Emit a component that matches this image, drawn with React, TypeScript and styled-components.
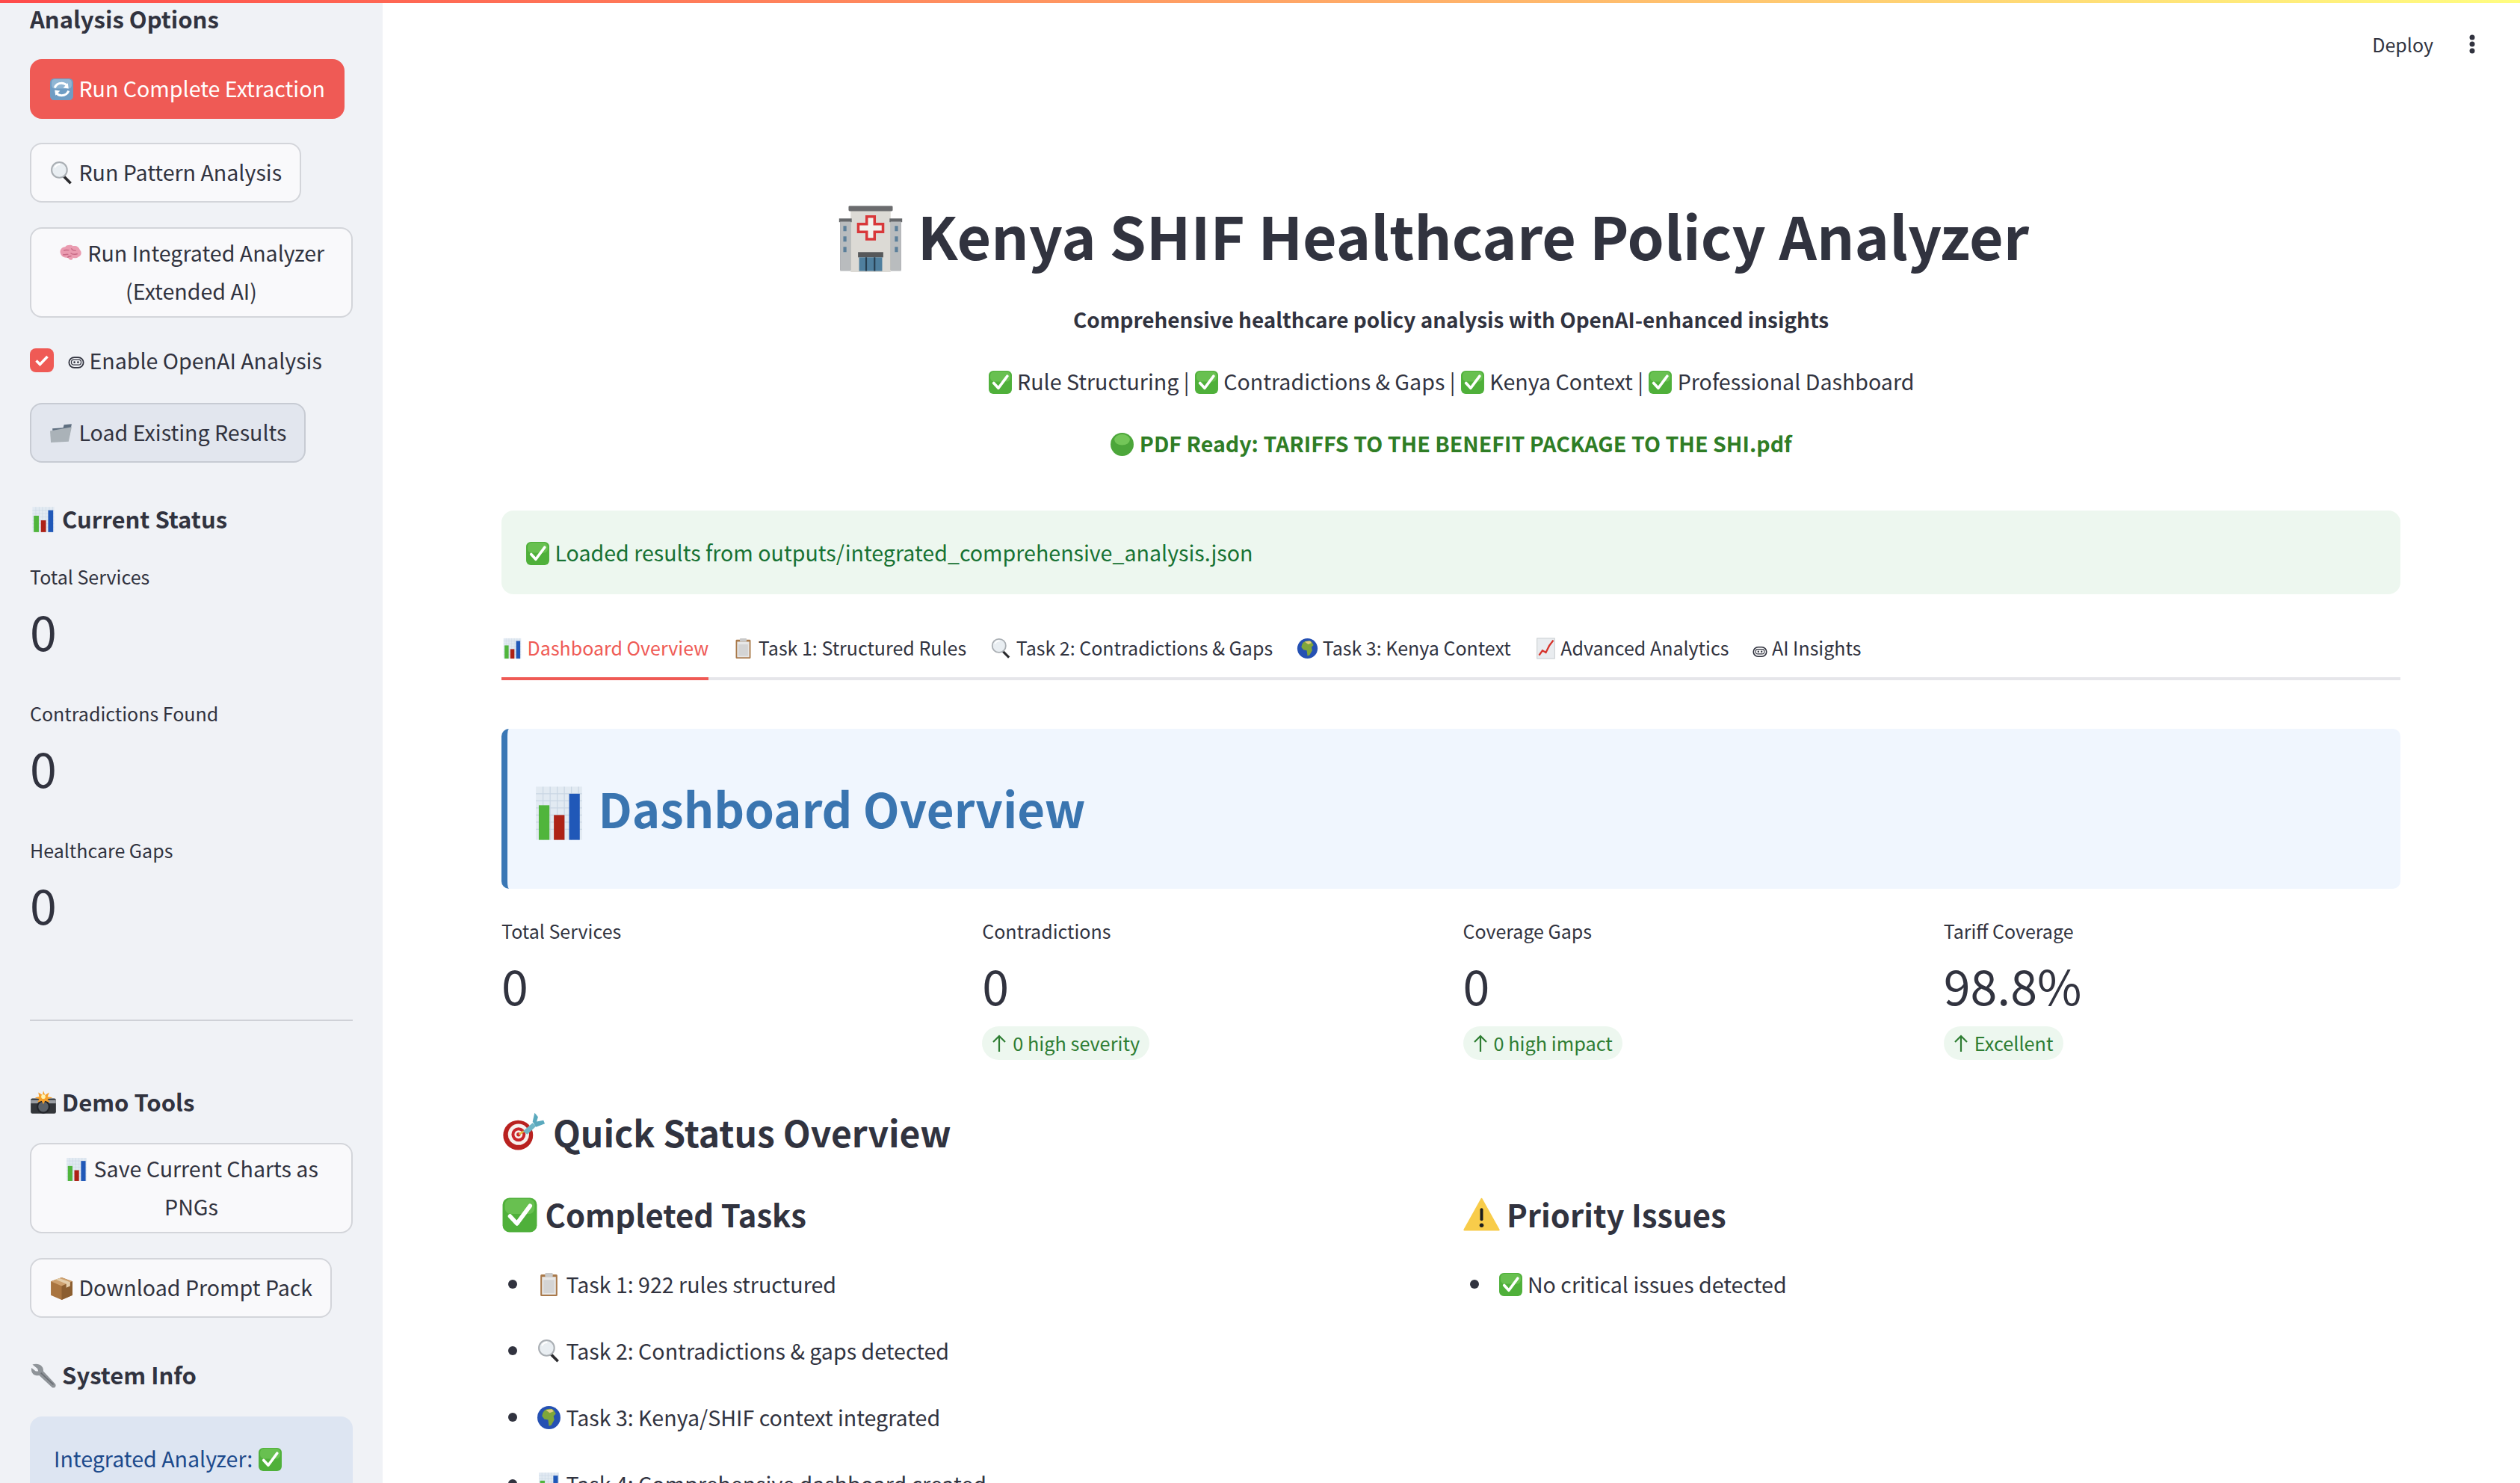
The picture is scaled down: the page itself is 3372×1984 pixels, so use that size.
import React from "react";
import styled, { createGlobalStyle } from "styled-components";

type EmojiKind =
  | "check" | "refresh" | "search" | "brain" | "robot" | "folder" | "chart" | "trend" | "camera"
  | "box" | "wrench" | "hospital" | "greenDot" | "clipboard" | "globe" | "target" | "warning";

const drawings: Record<EmojiKind, React.ReactNode> = {
  check: (
    <>
      <rect x="1" y="1" width="30" height="30" rx="6" fill="#4fb03a" />
      <rect x="3" y="2" width="26" height="13" rx="5" fill="#7acb5f" opacity=".6" />
      <path d="M7.5 17l6 6.5L25 8" fill="none" stroke="#fff" strokeWidth="3.6" strokeLinecap="round" strokeLinejoin="round" />
    </>
  ),
  refresh: (
    <>
      <rect x="1" y="2" width="30" height="28" rx="5" fill="#6f9dc4" />
      <rect x="3" y="3" width="26" height="12" rx="4" fill="#9ec0dc" opacity=".7" />
      <path d="M7 14c1.5-4 5-6 9-6 3 0 5 1 7 3" fill="none" stroke="#fff" strokeWidth="3" />
      <path d="M25 15l-7-1 6-6z" fill="#fff" />
      <path d="M25 18c-1.5 4-5 6-9 6-3 0-5-1-7-3" fill="none" stroke="#fff" strokeWidth="3" />
      <path d="M7 17l7 1-6 6z" fill="#fff" />
    </>
  ),
  search: (
    <>
      <path d="M20 19l9 9-2.5 2.5-9-9z" fill="#2b2b2e" />
      <circle cx="13" cy="12" r="10" fill="#e9eef2" stroke="#a9aeb3" strokeWidth="2" />
      <path d="M7 9c1.5-3 4-4.500 7-4" fill="none" stroke="#fff" strokeWidth="2" />
    </>
  ),
  brain: (
    <>
      <path d="M3 16c-2-5 2-9 6-9 2-3 8-3 10-1 4-1 8 1 9 5 3 3 2 8-2 9-2 2-5 2-7 1 0 3-3 4-5 2-1-2-2-2-4-2-3 0-6-2-7-5z" fill="#ea9bb0" />
      <path d="M7 12c3-2 5 0 7-1M17 9c1 3 4 3 6 3M6 17c3 1 5-1 7 0M16 15c2 2 6 2 9 1M12 21c1-2 3-2 5-2" fill="none" stroke="#c96c87" strokeWidth="1.4" />
    </>
  ),
  robot: (
    <>
      <rect x="2" y="6" width="28" height="20" rx="10" fill="none" stroke="#31333f" strokeWidth="2.6" />
      <rect x="6.500" y="10.500" width="19" height="10" rx="5" fill="none" stroke="#31333f" strokeWidth="1.800" />
      <circle cx="12.500" cy="15.500" r="1.900" fill="#31333f" />
      <circle cx="19.500" cy="15.500" r="1.900" fill="#31333f" />
    </>
  ),
  folder: (
    <>
      <path d="M4 10l14-1 1-4 10-1-3 16-21 2z" fill="#5f6f80" />
      <path d="M1 13l28-5-4 19-23 1z" fill="#aab2b8" />
    </>
  ),
  chart: (
    <>
      <rect x="3" y="1" width="26" height="30" fill="#e2eaf2" />
      <path d="M3 5h26M3 9h26M3 13h26M3 17h26M3 21h26M3 25h26M7 1v30M11 1v30M15 1v30M19 1v30M23 1v30M27 1v30" stroke="#c9d6e4" strokeWidth=".5" />
      <rect x="4.600" y="11.500" width="6" height="19.500" fill="#50b53c" />
      <rect x="13.100" y="17" width="6" height="14" fill="#ad2216" />
      <rect x="21.700" y="5" width="6" height="26" fill="#2058b8" />
    </>
  ),
  trend: (
    <>
      <rect x="3" y="1" width="26" height="30" fill="#e9ecef" stroke="#c4c8cc" />
      <path d="M6 26l5-7 5 3 5-10 6-8" fill="none" stroke="#d6332b" strokeWidth="2.6" />
    </>
  ),
  camera: (
    <>
      <rect x="1" y="11" width="30" height="18" rx="2" fill="#33363a" />
      <rect x="1" y="13" width="30" height="4" fill="#9a9ea3" />
      <circle cx="16" cy="21" r="7" fill="#5b6168" stroke="#22252a" strokeWidth="2" />
      <path d="M16 2l2 5 5-3-2 5 6 1-6 2 3 4-6-2-2 4-2-4-5 2 2-4-5-2 5-1-1-5 5 3z" fill="#f6a02b" />
      <circle cx="16" cy="9" r="2.500" fill="#fff3b0" />
    </>
  ),
  box: (
    <>
      <path d="M16 2l14 5v18l-14 6-14-6V7z" fill="#a9743f" />
      <path d="M2 7l14 6 14-6-14-5z" fill="#cda06e" />
      <path d="M16 13v18l14-6V7z" fill="#8c5e30" />
      <path d="M8 4.500l14 5.700v5l5-2V8L13 2.800z" fill="#e4cdaa" />
    </>
  ),
  wrench: (
    <>
      <path d="M3 3l6 5 1 3-3 0-5-4c-1 4 1 8 5 9 2 .5 3 0 4 0l15 14c1 1 3 1 4 0s1-3 0-4L16 11c0-2 0-4-2-6-3-3-7-3-11-2z" fill="#8f9499" />
      <path d="M13 13l15 14" stroke="#6b6f75" strokeWidth="1.500" />
    </>
  ),
  hospital: (
    <>
      <rect x="3" y="16" width="58" height="46" fill="#7b7f83" />
      <rect x="13" y="4" width="38" height="60" fill="#dcdad5" />
      <rect x="11" y="1" width="42" height="5" rx="1" fill="#6b6c6e" />
      <rect x="2" y="13" width="12" height="3.500" fill="#65676a" />
      <rect x="50" y="13" width="12" height="3.500" fill="#65676a" />
      <rect x="3" y="16" width="10" height="47" fill="#b9bcbe" />
      <rect x="51" y="16" width="10" height="47" fill="#b9bcbe" />
      <path d="M6 20h3v5H6zm0 10h3v5H6zm0 10h3v5H6zm49-20h3v5h-3zm0 10h3v5h-3zm0 10h3v5h-3z" fill="#5b7f9a" />
      <path d="M27 10h10v7h8v10h-8v7H27v-7h-8V17h8z" fill="#d8383a" />
      <path d="M29.500 12.500h5v7h8v5h-8v7h-5v-7h-8v-5h8z" fill="#f2f2ee" />
      <rect x="20" y="45" width="24" height="5" fill="#56585a" />
      <rect x="21" y="50" width="22" height="13" fill="#4f7f9e" />
      <path d="M27 50h1.500v13H27zm8 0h1.500v13H35z" fill="#263e50" />
    </>
  ),
  greenDot: (
    <>
      <circle cx="16" cy="16" r="15" fill="#4ca63a" />
      <ellipse cx="16" cy="10" rx="10" ry="7" fill="#84d465" opacity=".7" />
    </>
  ),
  clipboard: (
    <>
      <rect x="5" y="3" width="22" height="28" rx="1.500" fill="#a9794a" />
      <rect x="7" y="6" width="18" height="23" fill="#e7e7e7" />
      <rect x="11" y="1" width="10" height="5" rx="1" fill="#c9c9c9" />
      <path d="M9 10h14v17H9z" fill="#d4d4d4" />
    </>
  ),
  globe: (
    <>
      <circle cx="16" cy="16" r="15" fill="#2551b3" />
      <path d="M10 7c4-3 9-3 12-1l3 5-3 3 1 5-4 7-3 1-1-8-5-1-3-4 1-4z" fill="#7fa63a" />
      <path d="M12 6l8-1 2 3-5 2z" fill="#e3cb7b" />
    </>
  ),
  target: (
    <>
      <circle cx="12.300" cy="18" r="11" fill="#b9211f" />
      <circle cx="12.600" cy="17.500" r="7.800" fill="#f7f1ee" />
      <circle cx="12.600" cy="17.500" r="5.200" fill="#c9252b" />
      <circle cx="12.600" cy="17.500" r="3" fill="#f7f1ee" />
      <circle cx="12.600" cy="17.500" r="1.500" fill="#c9252b" />
      <path d="M13 17.500l3.500-2.500" stroke="#e5b93c" strokeWidth="1.400" />
      <path d="M16 15l7-6 2.500 2.500-6.500 6z" fill="#6fb6c6" />
      <path d="M23 8l1.500-6.500 2.500 3-1 3.500 5-1 1 2.500-6.500 2.500z" fill="#5aa9bd" />
    </>
  ),
  warning: (
    <>
      <path d="M16 2L31 29H1z" fill="#f8cc4a" stroke="#f8cc4a" strokeWidth="1.500" strokeLinejoin="round" />
      <rect x="14.700" y="10" width="2.600" height="11" rx="1.300" fill="#1d1d1d" />
      <circle cx="16" cy="25" r="1.800" fill="#1d1d1d" />
    </>
  ),
};

function Emoji({ kind, size = 33 }: { kind: EmojiKind; size?: number }) {
  const box = kind === "hospital" ? 64 : 32;
  return (
    <EmojiSvg width={size} height={size} viewBox={`0 0 ${box} ${box}`} aria-hidden="true">
      {drawings[kind]}
    </EmojiSvg>
  );
}

const tabs: { kind: EmojiKind; label: string; active?: boolean; iconSize?: number }[] = [
  { kind: "chart", label: "Dashboard Overview", active: true },
  { kind: "clipboard", label: "Task 1: Structured Rules" },
  { kind: "search", label: "Task 2: Contradictions & Gaps" },
  { kind: "globe", label: "Task 3: Kenya Context" },
  { kind: "trend", label: "Advanced Analytics" },
  { kind: "robot", label: "AI Insights", iconSize: 20 },
];

const metrics = [
  { label: "Total Services", value: "0" },
  { label: "Contradictions", value: "0", delta: "0 high severity" },
  { label: "Coverage Gaps", value: "0", delta: "0 high impact" },
  { label: "Tariff Coverage", value: "98.8%", delta: "Excellent" },
];

const tasks: { kind: EmojiKind; label: string }[] = [
  { kind: "clipboard", label: "Task 1: 922 rules structured" },
  { kind: "search", label: "Task 2: Contradictions & gaps detected" },
  { kind: "globe", label: "Task 3: Kenya/SHIF context integrated" },
  { kind: "chart", label: "Task 4: Comprehensive dashboard created" },
];

function SideMetric({ label }: { label: string }) {
  return (
    <SideMetricBox>
      <MetricLabel>{label}</MetricLabel>
      <MetricValue>0</MetricValue>
    </SideMetricBox>
  );
}

export default function App() {
  return (
    <Page>
      <GlobalStyle />
      <TopStripe />
      <Toolbar>
        <DeployLabel>Deploy</DeployLabel>
        <svg width="8" height="26" viewBox="0 0 8 26" aria-hidden="true">
          <circle cx="4" cy="4" r="3.500" fill="#31333f" />
          <circle cx="4" cy="13" r="3.500" fill="#31333f" />
          <circle cx="4" cy="22" r="3.500" fill="#31333f" />
        </svg>
      </Toolbar>

      <Sidebar>
        <SideHeading>Analysis Options</SideHeading>
        <ActionButton $variant="primary" $top={34}><Emoji kind="refresh" /> Run Complete Extraction</ActionButton>
        <ActionButton $top={32}><Emoji kind="search" /> Run Pattern Analysis</ActionButton>
        <ActionButton $wide $top={33}><Emoji kind="brain" /> Run Integrated Analyzer (Extended AI)</ActionButton>
        <CheckRow>
          <CheckBox>
            <svg width="24" height="24" viewBox="0 0 24 24" aria-hidden="true">
              <path d="M4.500 12.500l5 5L19.500 7" fill="none" stroke="#fff" strokeWidth="3.500" />
            </svg>
          </CheckBox>
          <CheckText><Emoji kind="robot" size={22} /> Enable OpenAI Analysis</CheckText>
        </CheckRow>
        <ActionButton $variant="hover" $top={41}><Emoji kind="folder" /> Load Existing Results</ActionButton>

        <SideHeading $top={55}><Emoji kind="chart" size={36} /> Current Status</SideHeading>
        <SideMetrics>
          <SideMetric label="Total Services" />
          <SideMetric label="Contradictions Found" />
          <SideMetric label="Healthcare Gaps" />
        </SideMetrics>
        <SideRule />

        <SideHeading $top={88}><Emoji kind="camera" size={36} /> Demo Tools</SideHeading>
        <ActionButton $wide $top={35}><Emoji kind="chart" /> Save Current Charts as PNGs</ActionButton>
        <ActionButton $top={33}><Emoji kind="box" /> Download Prompt Pack</ActionButton>

        <SideHeading $top={56}><Emoji kind="wrench" size={36} /> System Info</SideHeading>
        <InfoBox>Integrated Analyzer: <Emoji kind="check" /></InfoBox>
      </Sidebar>

      <Main>
        <Title><Emoji kind="hospital" size={90} /> Kenya SHIF Healthcare Policy Analyzer</Title>
        <Subtitle>Comprehensive healthcare policy analysis with OpenAI-enhanced insights</Subtitle>
        <CenterLine>
          <Emoji kind="check" /> Rule Structuring | <Emoji kind="check" /> Contradictions &amp; Gaps | <Emoji kind="check" /> Kenya Context | <Emoji kind="check" /> Professional Dashboard
        </CenterLine>
        <PdfLine><Emoji kind="greenDot" /> PDF Ready: TARIFFS TO THE BENEFIT PACKAGE TO THE SHI.pdf</PdfLine>

        <SuccessAlert><Emoji kind="check" /> Loaded results from outputs/integrated_comprehensive_analysis.json</SuccessAlert>

        <TabBar>
          {tabs.map((tab) => (
            <Tab key={tab.label} $active={tab.active}>
              <Emoji kind={tab.kind} size={tab.iconSize ?? 29} /> {tab.label}
            </Tab>
          ))}
        </TabBar>

        <SectionBanner>
          <Emoji kind="chart" size={76} /> Dashboard Overview
        </SectionBanner>

        <MetricGrid>
          {metrics.map((m) => (
            <div key={m.label}>
              <MetricLabel>{m.label}</MetricLabel>
              <MetricValue>{m.value}</MetricValue>
              {m.delta && (
                <DeltaPill>
                  <svg width="22" height="26" viewBox="0 0 22 26" aria-hidden="true">
                    <path d="M11 24V3M3 11l8-8 8 8" fill="none" stroke="#2e7d32" strokeWidth="2.200" />
                  </svg>
                  {m.delta}
                </DeltaPill>
              )}
            </div>
          ))}
        </MetricGrid>

        <H2><Emoji kind="target" size={58} /> Quick Status Overview</H2>

        <TwoColumns>
          <div>
            <H3><Emoji kind="check" size={49} /> Completed Tasks</H3>
            <BulletList>
              {tasks.map((t) => (
                <li key={t.label}><Emoji kind={t.kind} /> {t.label}</li>
              ))}
            </BulletList>
          </div>
          <div>
            <H3><Emoji kind="warning" size={49} /> Priority Issues</H3>
            <BulletList>
              <li><Emoji kind="check" /> No critical issues detected</li>
            </BulletList>
          </div>
        </TwoColumns>
      </Main>
    </Page>
  );
}

const GlobalStyle = createGlobalStyle`
  html, body {
    margin: 0;
    padding: 0;
    background: #fff;
  }
  * {
    box-sizing: border-box;
  }
`;

const Page = styled.div`
  position: relative;
  display: flex;
  width: 3372px;
  height: 1984px;
  overflow: hidden;
  color: #31333f;
  font-family: "Noto Sans CJK SC", "Noto Sans", sans-serif;
  font-size: 28.6px;
  line-height: 51px;
`;

const EmojiSvg = styled.svg`
  display: inline-block;
  vertical-align: -0.2em;
  flex-shrink: 0;
`;

const TopStripe = styled.div`
  position: absolute;
  top: 0;
  left: 0;
  right: 0;
  height: 4px;
  background: linear-gradient(90deg, #ff4b4b, #fffd80);
  z-index: 2;
`;

const Toolbar = styled.div`
  position: absolute;
  top: 46px;
  right: 60px;
  display: flex;
  align-items: center;
  gap: 48px;
  height: 26px;
`;

const DeployLabel = styled.span`
  font-size: 25px;
`;

const Sidebar = styled.aside`
  flex: 0 0 512px;
  height: 100%;
  padding: 5px 40px 0;
  background: #f0f2f6;
  display: flex;
  flex-direction: column;
  align-items: flex-start;

  > * {
    flex-shrink: 0;
  }
`;

const SideHeading = styled.h3<{ $top?: number }>`
  margin: ${(p) => p.$top ?? 0}px 0 0;
  font-size: 31px;
  line-height: 40px;
  font-weight: 600;
`;

const ActionButton = styled.button<{ $variant?: "primary" | "hover"; $wide?: boolean; $top: number }>`
  margin-top: ${(p) => p.$top}px;
  min-height: 80px;
  width: ${(p) => (p.$wide ? "100%" : "auto")};
  padding: 6px 24px 9px;
  border-radius: 16px;
  border: 2px solid ${(p) => (p.$variant === "primary" ? "#ef5a55" : p.$variant === "hover" ? "#c7cbd3" : "#d3d5da")};
  background: ${(p) => (p.$variant === "primary" ? "#ef5a55" : p.$variant === "hover" ? "#e2e6ee" : "#f9f9fb")};
  color: ${(p) => (p.$variant === "primary" ? "#fff" : "#31333f")};
  font: inherit;
  text-align: center;
`;

const CheckRow = styled.label`
  margin-top: 41px;
  display: flex;
  align-items: center;
  gap: 19px;
  height: 32px;
`;

const CheckText = styled.span`
  position: relative;
  top: -1px;

  svg {
    vertical-align: -0.1em;
  }
`;

const CheckBox = styled.span`
  width: 32px;
  height: 32px;
  border-radius: 8px;
  background: #ef5a55;
  display: flex;
  align-items: center;
  justify-content: center;
`;

const SideMetrics = styled.div`
  margin-top: 36px;
  display: flex;
  flex-direction: column;
  gap: 45px;
`;

const SideMetricBox = styled.div``;

const MetricLabel = styled.div`
  font-size: 25px;
  line-height: 42px;
`;

const MetricValue = styled.div`
  margin-top: 6px;
  font-size: 64.5px;
  line-height: 90px;
`;

const SideRule = styled.hr`
  width: 100%;
  margin: 110px 0 0;
  border: none;
  border-top: 2px solid #cfd1d7;
`;

const InfoBox = styled.div`
  margin-top: 36px;
  width: 100%;
  height: 220px;
  padding: 32px;
  border-radius: 16px;
  background: #dde5f2;
  color: #1c4a8c;
  line-height: 48px;
`;

const Main = styled.main`
  flex: 1;
  min-width: 0;
  padding: 259px 160px 0 159px;
`;

const Title = styled.h1`
  margin: 0;
  padding-right: 48px;
  text-align: center;
  font-size: 78.8px;
  line-height: 110px;
  font-weight: 700;

  svg {
    vertical-align: -0.2em;
  }
`;

const Subtitle = styled.p`
  margin: 33px 0 0;
  text-align: center;
  font-size: 27.9px;
  font-weight: 600;
`;

const CenterLine = styled.p`
  margin: 31px 0 0;
  text-align: center;
`;

const PdfLine = styled.p`
  margin: 32px 0 0;
  text-align: center;
  font-weight: 700;
  color: #2f7d25;
`;

const SuccessAlert = styled.div`
  margin-top: 65px;
  height: 112px;
  padding: 0 32px;
  display: block;
  line-height: 112px;
  border-radius: 16px;
  background: #edf7ef;
  color: #177233;
`;

const TabBar = styled.div`
  margin-top: 36px;
  display: flex;
  gap: 32px;
  border-bottom: 4px solid #e6e6ea;
  height: 79px;
`;

const Tab = styled.div<{ $active?: boolean }>`
  height: 79px;
  padding-top: 10px;
  font-size: 25px;
  color: ${(p) => (p.$active ? "#ef5a55" : "#31333f")};
  border-bottom: 4px solid ${(p) => (p.$active ? "#ef5a55" : "transparent")};
`;

const SectionBanner = styled.div`
  margin-top: 65px;
  height: 214px;
  padding-left: 31px;
  border-left: 8px solid #3a77b5;
  border-radius: 10px;
  background: #f0f6fe;
  color: #3a75b0;
  font-size: 63.5px;
  line-height: 210px;
  font-weight: 700;

  svg {
    vertical-align: -0.28em;
  }
`;

const MetricGrid = styled.div`
  margin-top: 35px;
  display: grid;
  grid-template-columns: repeat(4, 1fr);
  gap: 32px;
`;

const DeltaPill = styled.div`
  margin-top: 11px;
  display: inline-flex;
  align-items: center;
  gap: 7px;
  height: 45px;
  padding: 0 13px 0 12px;
  border-radius: 23px;
  background: #edf7ef;
  color: #2e7d32;
  font-size: 25.3px;
  line-height: 45px;
`;

const H2 = styled.h2`
  margin: 60px 0 0;
  font-size: 48px;
  line-height: 64px;
  font-weight: 600;
`;

const TwoColumns = styled.div`
  margin-top: 48px;
  display: grid;
  grid-template-columns: 1fr 1fr;
  gap: 32px;
`;

const H3 = styled.h3`
  margin: 0;
  font-size: 41.8px;
  line-height: 60px;
  font-weight: 600;
`;

const BulletList = styled.ul`
  margin: 38px 0 0;
  padding: 0 0 0 47px;
  list-style: none;

  li {
    position: relative;
    margin-bottom: 38px;
  }

  li::before {
    content: "";
    position: absolute;
    left: -38px;
    top: 20px;
    width: 12px;
    height: 12px;
    border-radius: 50%;
    background: #31333f;
  }
`;
